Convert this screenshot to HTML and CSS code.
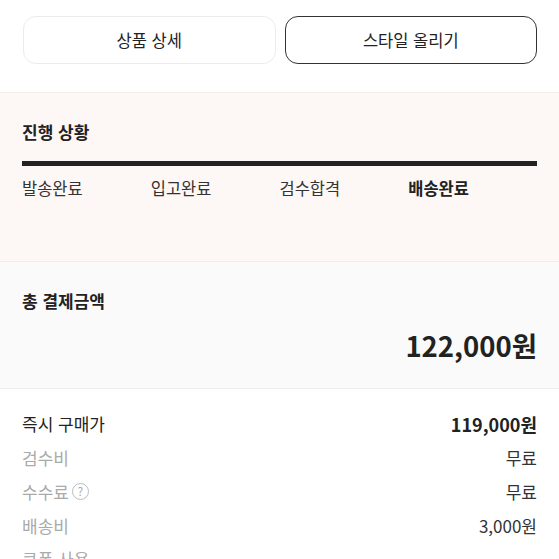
FILE: index.html
```html
<!DOCTYPE html>
<html lang="ko">
<head>
<meta charset="utf-8">
<link rel="stylesheet" href="styles.css">
</head>
<body>
<div class="tabs">
  <button class="tab">상품 상세</button>
  <button class="tab tab-active">스타일 올리기</button>
</div>
<section class="progress">
  <h2 class="sec-title">진행 상황</h2>
  <div class="bar"></div>
  <div class="steps">
    <span class="step">발송완료</span>
    <span class="step">입고완료</span>
    <span class="step">검수합격</span>
    <span class="step step-current">배송완료</span>
  </div>
</section>
<section class="total">
  <h2 class="sec-title">총 결제금액</h2>
  <div class="total-amount">122,000원</div>
</section>
<section class="details">
  <div class="row"><span class="label label-main">즉시 구매가</span><span class="value value-bold">119,000원</span></div>
  <div class="row"><span class="label">검수비</span><span class="value">무료</span></div>
  <div class="row"><span class="label">수수료<span class="help">?</span></span><span class="value">무료</span></div>
  <div class="row"><span class="label">배송비</span><span class="value">3,000원</span></div>
  <div class="row"><span class="label">쿠폰 사용</span><span class="value"></span></div>
</section>
</body>
</html>
```

FILE: styles.css
```css
* { box-sizing: border-box; }
html, body { margin: 0; padding: 0; background: #fff; }
body {
  font-family: "Noto Sans CJK KR", "Noto Sans", sans-serif;
  color: #222;
  overflow: hidden;
  height: 559px;
}
.tabs {
  display: flex;
  gap: 9px;
  padding: 16px 22px 28px 23px;
}
.tab {
  flex: 1;
  height: 48px;
  border: 1px solid #ececec;
  border-radius: 13px;
  background: #fff;
  font-family: inherit;
  font-size: 16.5px;
  color: #222;
  padding: 0;
}
.tab-active {
  border: 1.5px solid #333;
}
.progress {
  border-top: 1px solid #f1eeee;
  background: #fdf7f5;
  padding: 28px 22px 62px;
}
.sec-title {
  margin: 0;
  font-size: 17px;
  line-height: 22px;
  font-weight: 700;
  color: #222;
}
.bar {
  margin-top: 18px;
  height: 5px;
  background: #222;
}
.steps {
  display: grid;
  grid-template-columns: repeat(4, 1fr);
  margin-top: 11px;
  font-size: 16.5px;
  line-height: 22px;
  color: #333;
}
.step-current { font-weight: 700; color: #222; }
.total {
  border-top: 1px solid #f3ecea;
  border-bottom: 1px solid #eeeeee;
  background: #fafafa;
  padding: 28px 22px 26px;
}
.total-amount {
  margin-top: 16px;
  text-align: right;
  font-size: 27.5px;
  line-height: 34px;
  font-weight: 700;
  color: #222;
}
.details {
  padding: 18px 22px 0;
}
.row {
  display: flex;
  justify-content: space-between;
  align-items: center;
  height: 33.75px;
  font-size: 17px;
}
.label {
  color: #aaa;
  display: flex;
  align-items: center;
}
.label-main { color: #222; }
.value { color: #333; }
.value-bold { font-weight: 700; color: #222; font-size: 18px; }
.help {
  display: inline-flex;
  align-items: center;
  justify-content: center;
  width: 17px;
  height: 17px;
  margin-left: 3px;
  border: 1.3px solid #bbb;
  border-radius: 50%;
  font-size: 12px;
  line-height: 1;
  color: #aaa;
}
```
